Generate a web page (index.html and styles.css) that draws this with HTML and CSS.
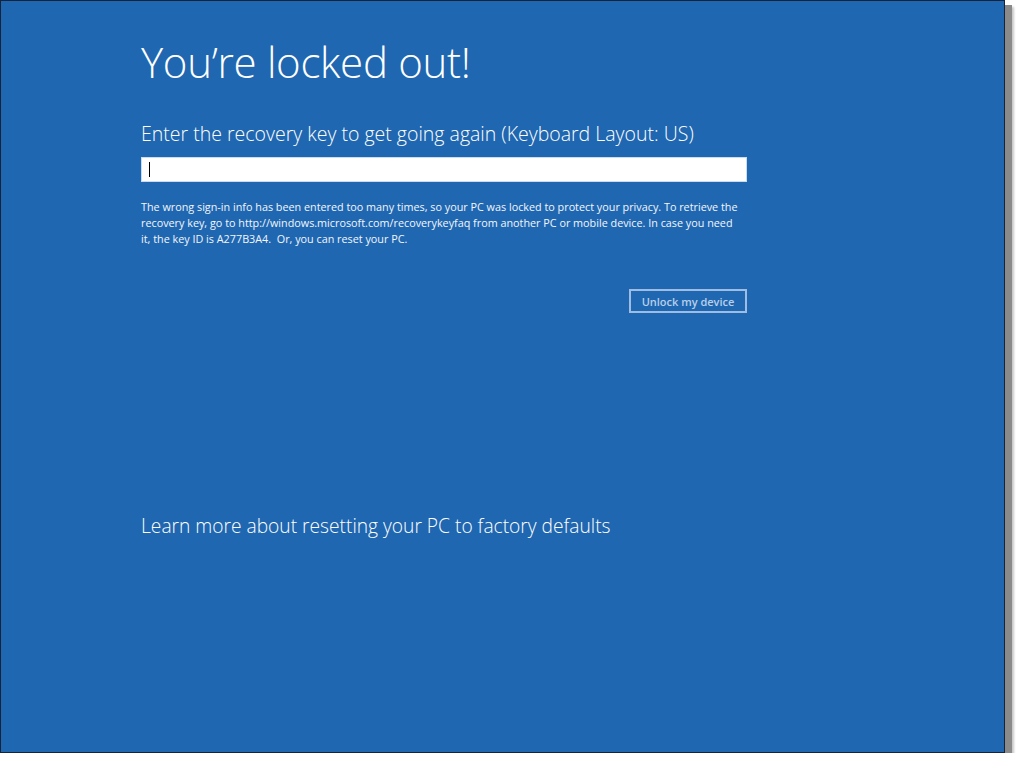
FILE: index.html
```html
<!DOCTYPE html>
<html lang="en">
<head>
  <meta charset="UTF-8">
  <title>You're locked out!</title>
  <link rel="stylesheet" href="styles.css">
</head>
<body>
  <div class="screen">
    <div class="content">
      <h1>You’re locked out!</h1>
      <h2>Enter the recovery key to get going again (Keyboard Layout: US)</h2>
      <div class="key-input"><span class="caret"></span></div>
      <p class="info">The wrong sign-in info has been entered too many times, so your PC was locked to protect your privacy. To retrieve the recovery key, go to http://windows.microsoft.com/recoverykeyfaq from another PC or mobile device. In case you need it, the key ID is A277B3A4.&nbsp; Or, you can reset your PC.</p>
      <div class="actions">
        <button type="button">Unlock my device</button>
      </div>
      <a class="learn" href="#">Learn more about resetting your PC to factory defaults</a>
    </div>
  </div>
</body>
</html>
```

FILE: styles.css
```css
body {
  margin: 0;
  background: #fff;
  font-family: 'Open Sans', 'Liberation Sans', sans-serif;
}
.screen {
  width: 1003px;
  height: 751px;
  background: #2067b1;
  border: 1px solid #16233a;
  box-shadow: 6px 6px 0 1px #8a8a8a, 8px 8px 2px 1px #c8c8c8;
}
.content {
  width: 606px;
  padding: 31px 0 0 140px;
  color: #fff;
}
h1 {
  margin: 0;
  font-size: 42px;
  font-weight: 300;
  line-height: 60px;
  letter-spacing: -0.3px;
}
h2 {
  margin: 28px 0 0;
  font-size: 19.5px;
  font-weight: 300;
  line-height: 28px;
}
.key-input {
  margin-top: 9px;
  height: 23px;
  background: #fff;
  border: 1px solid #c9dcf0;
  display: flex;
  align-items: center;
  padding-left: 7px;
}
.caret {
  width: 1px;
  height: 15px;
  background: #000;
}
.info {
  max-width: 600px;
  margin: 17px 0 0;
  font-size: 10.8px;
  line-height: 16px;
  color: #f3f6fb;
}
.actions {
  display: flex;
  justify-content: flex-end;
  margin-top: 42px;
}
button {
  width: 118px;
  height: 24px;
  background: transparent;
  border: 2px solid #9fbde2;
  color: #b9cfea;
  font-family: inherit;
  font-size: 11px;
  font-weight: 600;
  padding: 0;
}
.learn {
  display: block;
  margin-top: 199px;
  font-size: 19.2px;
  font-weight: 300;
  line-height: 28px;
  color: #fff;
  text-decoration: none;
}
```
